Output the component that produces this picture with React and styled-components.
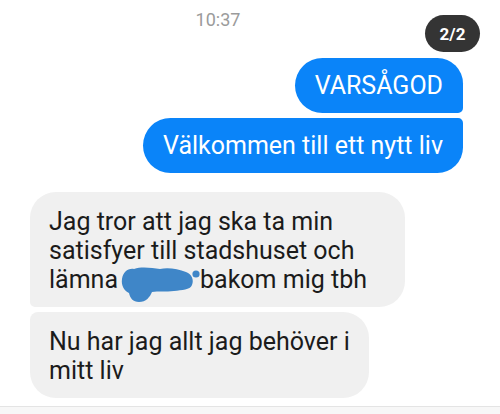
import React from "react";
import styled, { createGlobalStyle, css } from "styled-components";

const GlobalStyle = createGlobalStyle`
  html, body { margin: 0; padding: 0; background: #ffffff; }
  body { font-family: Roboto, "Noto Sans", "Liberation Sans", sans-serif; }
  * { box-sizing: border-box; }
`;

const Screen = styled.div`
  width: 500px;
  height: 414px;
  overflow: hidden;
  display: flex;
  flex-direction: column;
  background: #ffffff;
`;

const Header = styled.header`
  position: relative;
  height: 58px;
  padding-top: 10px;
`;

const Time = styled.div`
  text-align: center;
  padding-right: 64px;
  color: #9b9b9b;
  font-size: 18px;
  line-height: 20px;
`;

const Badge = styled.div`
  position: absolute;
  top: 15px;
  right: 20px;
  width: 55px;
  height: 37px;
  border-radius: 19px;
  background: #343434;
  color: #ffffff;
  font-size: 17px;
  font-weight: 700;
  display: flex;
  align-items: center;
  justify-content: center;
`;

const Group = styled.div`
  display: flex;
  flex-direction: column;
  gap: 5px;
  ${(p) =>
    p.$out
      ? css`
          align-items: flex-end;
          padding-right: 37px;
        `
      : css`
          align-items: flex-start;
          padding-left: 30px;
          margin-top: 19px;
        `}
`;

const big = "26px";
const small = "5px";

const Bubble = styled.div`
  width: fit-content;
  font-size: 25px;
  color: ${(p) => (p.$out ? "#ffffff" : "#1b1b1b")};
  background: ${(p) => (p.$out ? "#0a84f9" : "#f0f0f0")};
  ${(p) =>
    p.$out
      ? css`
          line-height: 28px;
          padding: 14px 20px 13px;
          border-radius: 28px ${p.$pos === "first" ? big : small}
            ${p.$pos === "first" ? small : big} 28px;
        `
      : css`
          line-height: 29px;
          padding: 15px ${p.$padRight || 19}px 13px 19px;
          border-radius: ${p.$pos === "first" ? big : "8px"} 26px 26px
            ${p.$pos === "first" ? small : big};
        `}
`;

const Hidden = styled.span`
  position: relative;
  display: inline-block;
  width: 70px;
  height: 20px;
  margin: 0 6px;
  vertical-align: baseline;
`;

const Blob = styled.svg`
  position: absolute;
  left: -4px;
  top: -2px;
  width: 80px;
  height: 36px;
  overflow: visible;
`;

const Footer = styled.div`
  margin-top: auto;
  height: 8px;
  border-top: 1px solid #e4e4e4;
  background: #f7f7f7;
`;

function Scribble() {
  return (
    <Hidden>
      <Blob viewBox="0 0 80 36">
        <g fill="#3f86c8">
          <path d="M2 13 C3 6 8 2 14 3 C22 0 32 2 40 3 C48 1 58 3 66 6 C72 8 74 14 72 19 C70 24 62 24 54 25 C46 26 38 25 32 26 C30 31 26 36 19 36 C13 36 10 32 9 27 C4 25 1 19 2 13 Z" />
          <circle cx="76" cy="8" r="3.6" />
        </g>
      </Blob>
    </Hidden>
  );
}

export default function App() {
  return (
    <>
      <GlobalStyle />
      <Screen>
        <Header>
          <Time>10:37</Time>
          <Badge>2/2</Badge>
        </Header>
        <Group $out>
          <Bubble $out $pos="first">VARSÅGOD</Bubble>
          <Bubble $out $pos="last">Välkommen till ett nytt liv</Bubble>
        </Group>
        <Group>
          <Bubble $pos="first" $padRight={38}>
            Jag tror att jag ska ta min
            <br />
            satisfyer till stadshuset och
            <br />
            lämna<Scribble />bakom mig tbh
          </Bubble>
          <Bubble $pos="last">
            Nu har jag allt jag behöver i
            <br />
            mitt liv
          </Bubble>
        </Group>
        <Footer />
      </Screen>
    </>
  );
}
